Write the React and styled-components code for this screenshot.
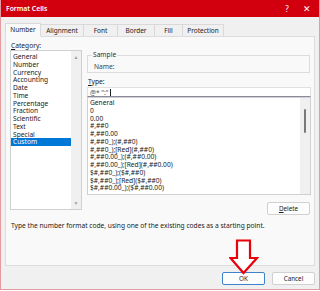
import React from 'react'
import styled, { createGlobalStyle } from 'styled-components'

const categories = [
  'General', 'Number', 'Currency', 'Accounting', 'Date', 'Time',
  'Percentage', 'Fraction', 'Scientific', 'Text', 'Special', 'Custom',
]

const formats = [
  'General', '0', '0.00', '#,##0', '#,##0.00',
  '#,##0_);(#,##0)', '#,##0_);[Red](#,##0)', '#,##0.00_);(#,##0.00)',
  '#,##0.00_);[Red](#,##0.00)', '$#,##0_);($#,##0)',
  '$#,##0_);[Red]($#,##0)', '$#,##0.00_);($#,##0.00)',
]

const tabs = [
  { label: 'Number', width: 36 },
  { label: 'Alignment', width: 43 },
  { label: 'Font', width: 34 },
  { label: 'Border', width: 37 },
  { label: 'Fill', width: 28 },
  { label: 'Protection', width: 41 },
]

const GlobalStyle = createGlobalStyle`
    * { box-sizing: border-box; }
    body {
        margin: 0;
        background: #fff;
        font-family: "Noto Sans", "Open Sans", sans-serif;
        color: #1a1a1a;
    }
`

const Window = styled.div`
    width: 320px;
    height: 290px;
    display: flex;
    flex-direction: column;
    background: #f0f0f0;
    border: 1px solid #e39ba0;
    border-top: none;
    position: relative;
`

const TitleBar = styled.div`
    height: 17px;
    flex-shrink: 0;
    display: flex;
    align-items: center;
    justify-content: space-between;
    background: #d2000f;
    color: #fff;
    padding-left: 5px;
`

const Title = styled.span`
    font-size: 6.8px;
    font-weight: 600;
`

const TitleControls = styled.div`
    display: flex;
    height: 100%;
`

const TitleButton = styled.span`
    width: ${p => p.$width}px;
    display: flex;
    align-items: center;
    justify-content: center;
    font-size: ${p => p.$size}px;
`

const Body = styled.div`
    flex: 1;
    display: flex;
    flex-direction: column;
    padding: 6px 4px 0 4px;
`

const TabStrip = styled.div`
    display: flex;
    height: 13px;
    align-items: flex-end;
    position: relative;
    z-index: 1;
`

const Tab = styled.div`
    width: ${p => p.$width}px;
    height: ${p => p.$active ? 14 : 12}px;
    display: flex;
    align-items: center;
    justify-content: center;
    font-size: 6.5px;
    color: #222;
    background: ${p => p.$active ? '#f9f9f9' : '#f0f0f0'};
    border: 1px solid #d9d9d9;
    border-bottom: ${p => p.$active ? '1px solid #f9f9f9' : 'none'};
    border-left-width: ${p => p.$first ? 1 : 0}px;
    margin-bottom: ${p => p.$active ? -1 : 0}px;
    padding-bottom: ${p => p.$active ? 1 : 0}px;
`

const Panel = styled.div`
    height: 230px;
    flex-shrink: 0;
    background: #f9f9f9;
    border: 1px solid #dcdcdc;
    padding: 4px 3px 0 4px;
    display: flex;
    flex-direction: column;
`

const Columns = styled.div`
    display: grid;
    grid-template-columns: 72px 1fr;
    column-gap: 5px;
    align-items: start;
`

const Column = styled.div`
    display: flex;
    flex-direction: column;
    padding-top: ${p => p.$offset || 0}px;
`

const FieldLabel = styled.div`
    font-size: 6.65px;
    line-height: 9px;
    padding-left: 1px;
    margin-top: ${p => p.$gap || 0}px;
`

const ListBox = styled.div`
    height: ${p => p.$height}px;
    background: #fff;
    border: 1px solid #d0d0d0;
    display: flex;
`

const ListItems = styled.div`
    flex: 1;
    padding-top: ${p => p.$top || 1}px;
    overflow: hidden;
`

const ListItem = styled.div`
    height: 7.75px;
    line-height: 7.75px;
    font-size: 6.65px;
    padding-left: 2px;
    white-space: nowrap;
    background: ${p => p.$selected ? '#0078d7' : 'transparent'};
    color: ${p => p.$selected ? '#fff' : '#1a1a1a'};
`

const ScrollTrack = styled.div`
    width: ${p => p.$width}px;
    background: #f0f0f0;
    display: flex;
    flex-direction: column;
    align-items: center;
    justify-content: ${p => p.$arrows ? 'space-between' : 'flex-start'};
    padding: 3px 0;
`

const ArrowGlyph = styled.span`
    font-size: 5px;
    line-height: 6px;
    color: #a0a0a0;
`

const Thumb = styled.div`
    width: 2px;
    height: 24px;
    margin-top: 8px;
    background: #7a7a7a;
    border-radius: 1px;
`

const GroupBox = styled.fieldset`
    margin: 0 1px 0 0;
    padding: 0 0 0 6px;
    height: 22px;
    border: 1px solid #dcdcdc;
    min-width: 0;
`

const Legend = styled.legend`
    font-size: 6.65px;
    line-height: 8px;
    padding: 0 1px;
    margin-left: -2px;
    color: #333;
`

const GroupText = styled.div`
    font-size: 6.65px;
    line-height: 10px;
    margin-top: 3px;
    color: #444;
`

const TypeInput = styled.div`
    height: 10px;
    margin-top: 1px;
    background: #fff;
    border: 1px solid #e0e0e0;
    border-bottom: 1px solid #8a8a9a;
    font-size: 6.65px;
    padding-left: 2px;
    display: flex;
    align-items: center;
    color: #555;
`

const Caret = styled.span`
    width: 1px;
    height: 7px;
    background: #222;
    margin-left: 1px;
`

const ButtonRow = styled.div`
    display: flex;
    justify-content: flex-end;
    gap: 7px;
    margin-top: ${p => p.$top || 0}px;
    padding-right: ${p => p.$right || 0}px;
`

const DialogButton = styled.div`
    width: 43px;
    height: 13px;
    display: flex;
    align-items: center;
    justify-content: center;
    font-size: 6.3px;
    color: #222;
    background: #fdfdfd;
    border: 1px solid ${p => p.$primary ? '#3e83c9' : '#d0d0d0'};
    border-radius: 2px;
`

const Hint = styled.div`
    font-size: 6.65px;
    line-height: 9px;
    margin-top: 6px;
    padding-left: 1px;
`

const Footer = styled.div`
    padding-top: 6px;
`

const CalloutArrow = styled.svg`
    position: absolute;
    left: 228px;
    top: 239px;
    width: 30px;
    height: 36px;
`

export default function App() {
  return (
    <>
      <GlobalStyle />
      <Window>
        <TitleBar>
          <Title>Format Cells</Title>
          <TitleControls>
            <TitleButton $width={16} $size={8}>?</TitleButton>
            <TitleButton $width={24} $size={9}>✕</TitleButton>
          </TitleControls>
        </TitleBar>
        <Body>
          <TabStrip>
            {tabs.map((t, i) => (
              <Tab key={t.label} $width={t.width} $active={i === 0} $first={i === 0}>{t.label}</Tab>
            ))}
          </TabStrip>
          <Panel>
            <Columns>
              <Column>
                <FieldLabel><u>C</u>ategory:</FieldLabel>
                <ListBox $height={160}>
                  <ListItems $top={2}>
                    {categories.map(c => (
                      <ListItem key={c} $selected={c === 'Custom'}>{c}</ListItem>
                    ))}
                  </ListItems>
                  <ScrollTrack $width={10} $arrows>
                    <ArrowGlyph>▲</ArrowGlyph>
                    <ArrowGlyph>▼</ArrowGlyph>
                  </ScrollTrack>
                </ListBox>
              </Column>
              <Column $offset={10}>
                <GroupBox>
                  <Legend>Sample</Legend>
                  <GroupText>Name:</GroupText>
                </GroupBox>
                <FieldLabel $gap={4}><u>T</u>ype:</FieldLabel>
                <TypeInput>@* ":"<Caret /></TypeInput>
                <ListBox $height={98}>
                  <ListItems>
                    {formats.map(f => (
                      <ListItem key={f}>{f}</ListItem>
                    ))}
                  </ListItems>
                  <ScrollTrack $width={10}>
                    <Thumb />
                  </ScrollTrack>
                </ListBox>
                <ButtonRow $top={7} $right={1}>
                  <DialogButton><u>D</u>elete</DialogButton>
                </ButtonRow>
              </Column>
            </Columns>
            <Hint>Type the number format code, using one of the existing codes as a starting point.</Hint>
          </Panel>
          <Footer>
            <ButtonRow>
              <DialogButton $primary>OK</DialogButton>
              <DialogButton>Cancel</DialogButton>
            </ButtonRow>
          </Footer>
        </Body>
        <CalloutArrow viewBox="0 0 30 36">
          <polygon
            points="8,1.5 21,1.5 21,19 28,19 14.5,34 1.5,19 8,19"
            fill="#fff"
            stroke="#e8000b"
            strokeWidth="2.2"
          />
        </CalloutArrow>
      </Window>
    </>
  )
}
